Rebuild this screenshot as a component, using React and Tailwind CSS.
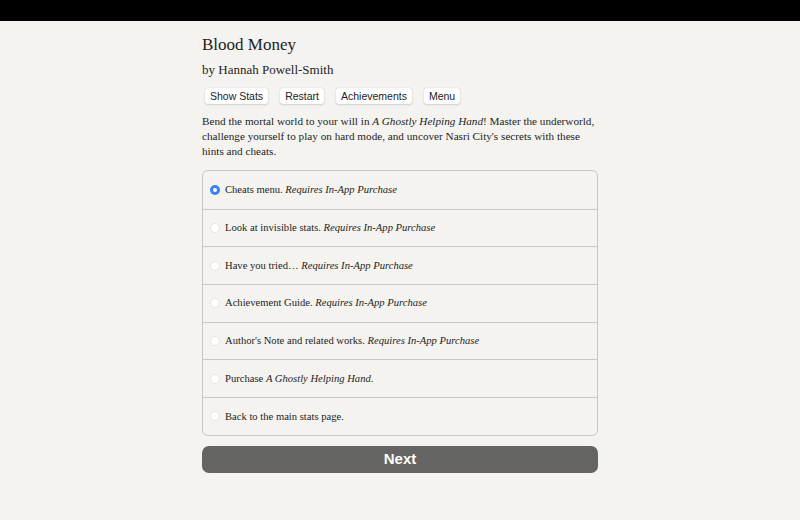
import React from "react";

const serif = { fontFamily: '"Liberation Serif", "DejaVu Serif", serif' };

const choices = [
  { text: "Cheats menu.", req: true, selected: true },
  { text: "Look at invisible stats.", req: true },
  { text: "Have you tried…", req: true },
  { text: "Achievement Guide.", req: true },
  { text: "Author's Note and related works.", req: true },
  { text: "purchase" },
  { text: "Back to the main stats page." },
];

function Radio({ selected }) {
  if (selected) {
    return (
      <span className="w-[10px] h-[10px] rounded-full bg-[#3b82f6] flex items-center justify-center shrink-0">
        <span className="w-[4px] h-[4px] rounded-full bg-white" />
      </span>
    );
  }
  return <span className="w-[10px] h-[10px] rounded-full bg-white border border-[#e6e5e1] shrink-0" />;
}

export default function App() {
  return (
    <div className="w-[800px] h-[520px] bg-[#f4f3ef] flex flex-col overflow-hidden text-[#1e1e1e]">
      <div className="h-[21px] bg-black shrink-0" />
      <div className="w-[396px] mx-auto flex flex-col" style={serif}>
        <h1 className="text-[17px] leading-[20px] mt-[14px]">Blood Money</h1>
        <div className="text-[13px] leading-[16px] mt-[7px]">by Hannah Powell-Smith</div>
        <div
          className="flex gap-[12px] mt-[10px] ml-[3px] text-[10.5px] text-[#222]"
          style={{ fontFamily: '"Liberation Sans", Arial, sans-serif' }}
        >
          {["Show Stats", "Restart", "Achievements", "Menu"].map((b) => (
            <span
              key={b}
              className="bg-white rounded-[3px] px-[5px] h-[16px] leading-[16px] shadow-[0_0_1px_rgba(0,0,0,0.25),0_1px_2px_rgba(0,0,0,0.12)]"
            >
              {b}
            </span>
          ))}
        </div>
        <p className="text-[11.2px] leading-[15px] mt-[10px]">
          Bend the mortal world to your will in <i>A Ghostly Helping Hand</i>! Master the underworld,
          challenge yourself to play on hard mode, and uncover Nasri City's secrets with these hints and
          cheats.
        </p>
        <div className="mt-[11px] border border-[#c9c8c4] rounded-[6px] flex flex-col">
          {choices.map((c, i) => (
            <div
              key={i}
              className={
                "h-[37.7px] flex items-center gap-[5px] pl-[7px] text-[10.6px] " +
                (i > 0 ? "border-t border-[#c9c8c4]" : "")
              }
            >
              <Radio selected={c.selected} />
              <span>
                {c.text === "purchase" ? (
                  <>
                    Purchase <i>A Ghostly Helping Hand</i>.
                  </>
                ) : (
                  <>
                    {c.text}
                    {c.req && (
                      <>
                        {" "}
                        <i>Requires In-App Purchase</i>
                      </>
                    )}
                  </>
                )}
              </span>
            </div>
          ))}
        </div>
        <button
          className="mt-[10px] h-[27px] rounded-[7px] bg-[#646462] text-white text-[15px] font-bold"
          style={{ fontFamily: '"Liberation Sans", Arial, sans-serif' }}
        >
          Next
        </button>
      </div>
    </div>
  );
}
